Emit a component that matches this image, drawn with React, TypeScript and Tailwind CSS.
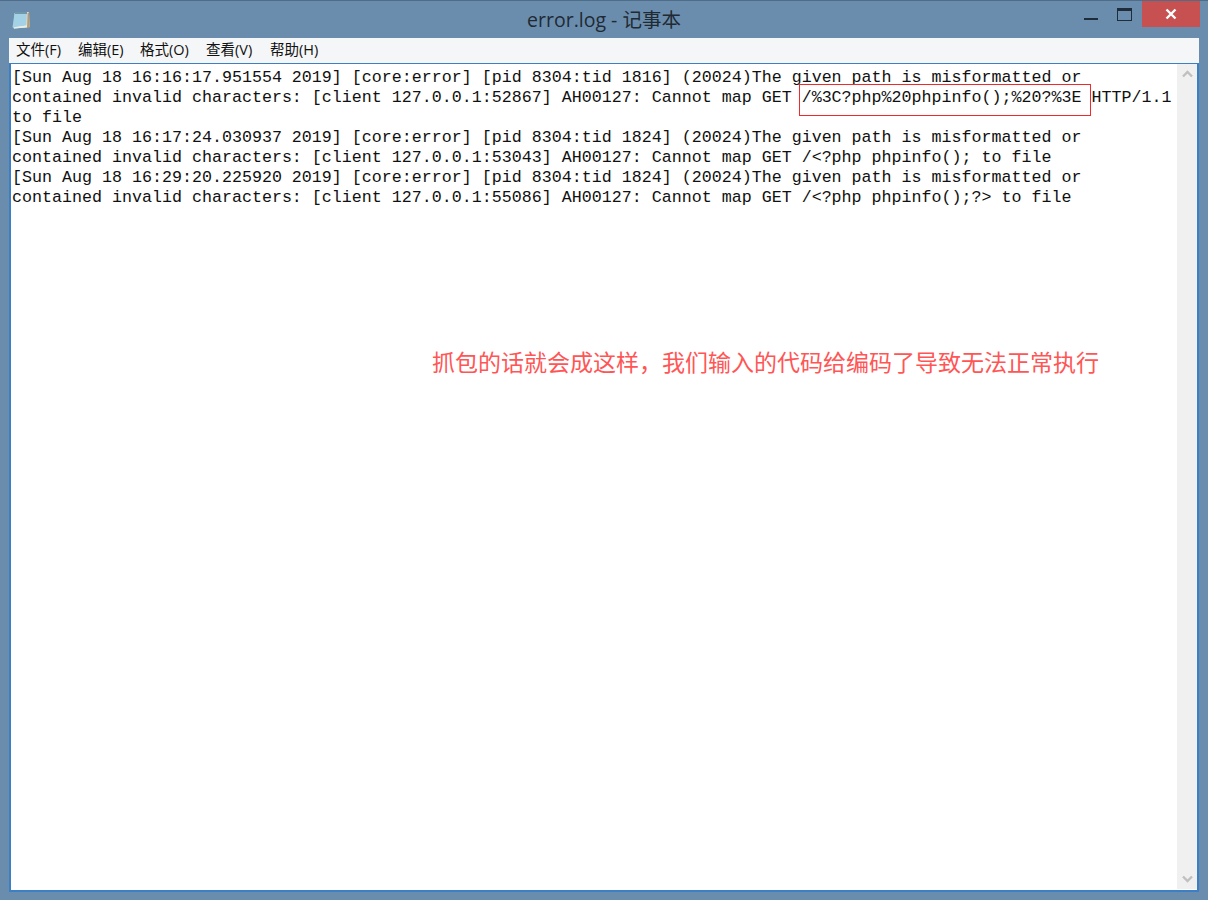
const mono = { fontFamily: '"Liberation Mono", "Noto Sans CJK SC", monospace' };

function NotepadIcon() {
  return (
    <svg width="20" height="20" viewBox="0 0 20 20" className="ml-[11px] mt-[9px]">
      <path d="M4 2 L18 2 L18.5 17 L3 18.5 Z" fill="#f4edd8" />
      <path d="M16.5 2.5 L18 2.5 L18.5 17.5 L16 18 Z" fill="#b89c6e" />
      <path d="M3.5 3 L16 2.5 L15.5 15.5 L1.5 17.5 Z" fill="#a3d2e6" />
      <path d="M2 17.5 L15.5 15.5 L16 17.5 L3 18.5 Z" fill="#e6eee8" />
      <path d="M4 2 H16 V4 H4 Z" fill="#6f97ad" />
    </svg>
  );
}

const menus = [
  { label: '文件(F)', width: 'w-[62px]' },
  { label: '编辑(E)', width: 'w-[62px]' },
  { label: '格式(O)', width: 'w-[66px]' },
  { label: '查看(V)', width: 'w-[64px]' },
  { label: '帮助(H)', width: 'w-[64px]' },
];

const lines = [
  '[Sun Aug 18 16:16:17.951554 2019] [core:error] [pid 8304:tid 1816] (20024)The given path is misformatted or',
  'contained invalid characters: [client 127.0.0.1:52867] AH00127: Cannot map GET /%3C?php%20phpinfo();%20?%3E HTTP/1.1',
  'to file',
  '[Sun Aug 18 16:17:24.030937 2019] [core:error] [pid 8304:tid 1824] (20024)The given path is misformatted or',
  'contained invalid characters: [client 127.0.0.1:53043] AH00127: Cannot map GET /<?php phpinfo(); to file',
  '[Sun Aug 18 16:29:20.225920 2019] [core:error] [pid 8304:tid 1824] (20024)The given path is misformatted or',
  'contained invalid characters: [client 127.0.0.1:55086] AH00127: Cannot map GET /<?php phpinfo();?> to file',
];

export default function App() {
  return (
    <div className="w-[1208px] h-[900px] flex flex-col bg-[#6a8dae] overflow-hidden border-t border-[#4f6c88]">
      {/* Title bar */}
      <div className="h-[37px] flex shrink-0">
        <div className="w-[200px] shrink-0">
          <NotepadIcon />
        </div>
        <div
          className="flex-1 text-center text-[19.5px] leading-[37px] text-[#1f2a33]"
          style={{ fontFamily: '"Open Sans", "Noto Sans CJK SC", sans-serif' }}
        >
          error.log - 记事本
        </div>
        <div className="w-[200px] shrink-0 flex items-start justify-end pr-[8px]">
          <div className="w-[14px] h-[2px] bg-[#1f2d3a] mt-[17px] mr-[19px]" />
          <div className="w-[15px] h-[13px] border border-[#1f2d3a] border-t-[3px] mt-[7px] mr-[10px]" />
          <div className="w-[58px] h-[26px] bg-[#c75050] flex items-center justify-center">
            <svg width="12" height="12" viewBox="0 0 12 12">
              <path d="M1.5 1.5 L10.5 10.5 M10.5 1.5 L1.5 10.5" stroke="#ffffff" strokeWidth="2.4" />
            </svg>
          </div>
        </div>
      </div>

      {/* Client area */}
      <div className="flex-1 flex flex-col mx-[9px] mb-[8px] min-h-0">
        <div
          className="h-[25px] shrink-0 bg-[#f5f6f7] flex items-center pl-[7px] pb-[2px] text-[14.5px] text-[#111111]"
          style={{ fontFamily: '"Open Sans", "Noto Sans CJK SC", sans-serif' }}
        >
          {menus.map(m => (
            <span key={m.label} className={m.width}>{m.label}</span>
          ))}
        </div>

        <div className="flex-1 flex min-h-0 bg-white border-2 border-t border-[#3c7fc4] relative">
          <div
            className="flex-1 min-w-0 pl-[1px] pt-[4px] text-[16.67px] leading-[20px] text-[#111111] whitespace-pre"
            style={mono}
          >
            {lines.map((l, i) => (
              <div key={i}>{l}</div>
            ))}
          </div>

          <div className="w-[20px] flex flex-col justify-between items-center bg-[#f0f0f0] mb-[1px] py-[6px] shrink-0">
            <svg width="11" height="8" viewBox="0 0 11 8">
              <path d="M1 6.5 L5.5 2 L10 6.5" fill="none" stroke="#c0c0c0" strokeWidth="2.4" />
            </svg>
            <svg width="11" height="8" viewBox="0 0 11 8">
              <path d="M1 1.5 L5.5 6 L10 1.5" fill="none" stroke="#c0c0c0" strokeWidth="2.4" />
            </svg>
          </div>

          {/* annotation over the text */}
          <div className="absolute left-[788px] top-[20px] w-[292px] h-[32px] border border-[#ee2a2a]" />
          <div
            className="absolute left-[421px] top-[282px] text-[23px] leading-[30px] text-[#ff5555] whitespace-nowrap"
            style={{ fontFamily: '"Noto Sans CJK SC", sans-serif' }}
          >
            抓包的话就会成这样，我们输入的代码给编码了导致无法正常执行
          </div>
        </div>
      </div>
    </div>
  );
}
